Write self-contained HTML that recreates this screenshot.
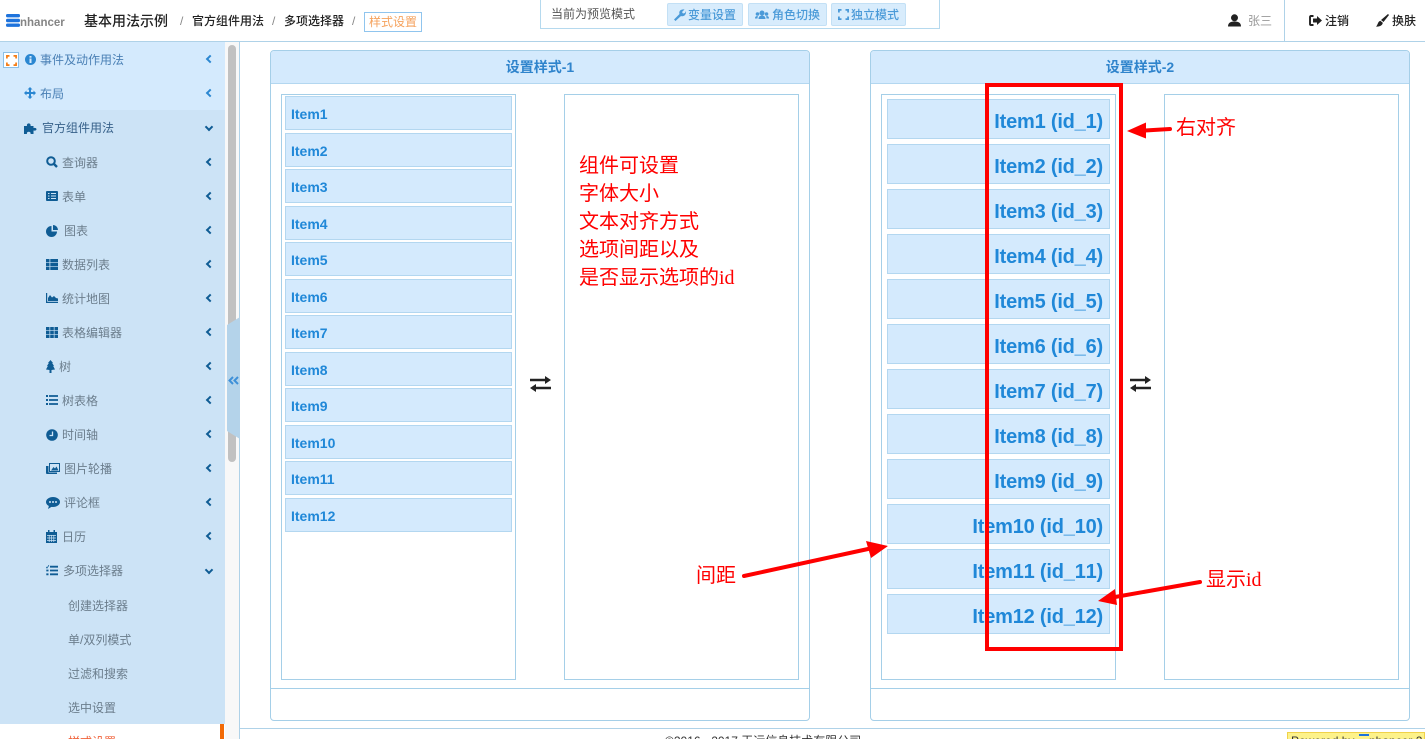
<!DOCTYPE html>
<html lang="zh"><head><meta charset="utf-8"><title>样式设置</title>
<style>
*{box-sizing:border-box}
html,body{margin:0;padding:0;width:1425px;height:739px;overflow:hidden;background:#fff;font-family:"Liberation Sans","Noto Sans CJK SC",sans-serif;font-size:12px;color:#333}
#w{position:relative;width:1425px;height:739px;overflow:hidden}
.a{position:absolute;white-space:nowrap}
svg{position:absolute;overflow:visible}
.m{position:absolute;white-space:nowrap;line-height:20px;height:20px;color:#6b7d8c;font-size:12px}
.m1{color:#4a80b5}
.ch{position:absolute;left:207px;width:6px;height:6px;border-left:2px solid #0f5c94;border-bottom:2px solid #0f5c94;transform:rotate(45deg)}
.ch.b{border-color:#2b87d1}
.ch.d{left:206px;transform:rotate(-45deg)}
.it{position:absolute;background:#d4eafd;border:1px solid #b3d7f0;color:#2088d8;font-weight:bold}
.l .it{left:285px;width:227px;height:34px;line-height:34px;padding-left:5px;font-size:14px}
.r .it{left:887px;width:223px;height:40px;line-height:44px;padding-right:6px;text-align:right;font-size:20px;letter-spacing:-.2px;font-kerning:none}
.box{position:absolute;top:94px;width:235px;height:586px;border:1px solid #a5cfe8;background:#fff}
.panel{position:absolute;top:50px;height:671px;border:1px solid #a5cfe8;border-radius:4px;background:#fff}
.head{position:absolute;left:0;right:0;top:0;height:33px;background:#d4eafd;border-bottom:1px solid #b3d7f0;border-radius:3px 3px 0 0;text-align:center;line-height:32px;color:#2f84cc;font-weight:bold;font-size:14px}
.foot{position:absolute;left:0;right:0;top:637px;border-top:1px solid #a5cfe8}
.btn{position:absolute;top:3px;height:23px;background:#d8ecfc;border:1px solid #c3e0f5;border-radius:2px;color:#4a9ad8;font-size:12px;line-height:22px;font-weight:500;white-space:nowrap}
.red{position:absolute;color:#f00;font-size:20px;white-space:nowrap;font-family:"Liberation Serif","Noto Sans CJK SC",sans-serif}
</style></head><body><div id="w">

<!-- header -->
<div class="a" style="left:0;top:41px;width:1425px;height:1px;background:#afd2e8"></div>
<svg style="left:6px;top:14px" width="14" height="13"><rect y="0" width="14" height="3.400" rx="1.500" fill="#1e73dc"/><rect y="4.800" width="14" height="3.400" rx="1.500" fill="#1e73dc"/><rect y="9.500" width="14" height="3.400" rx="1.500" fill="#1e73dc"/></svg>
<div class="a" style="left:20px;top:15px;font-size:11.500px;font-weight:bold;color:#858585;line-height:16px">nhancer</div>
<div class="a" style="left:84px;top:11px;font-size:14px;line-height:20px;color:#222;font-weight:500">基本用法示例</div>
<div class="a" style="left:180px;top:13px;line-height:16px;color:#888">/</div>
<div class="a" style="left:192px;top:13px;line-height:17px;color:#222;font-weight:500">官方组件用法</div>
<div class="a" style="left:272px;top:13px;line-height:16px;color:#888">/</div>
<div class="a" style="left:284px;top:13px;line-height:17px;color:#222;font-weight:500">多项选择器</div>
<div class="a" style="left:352px;top:13px;line-height:16px;color:#888">/</div>
<div class="a" style="left:364px;top:12px;width:58px;height:20px;border:1px solid #90c5ee;color:#f5a25d;text-align:center;line-height:18px">样式设置</div>

<div class="a" style="left:540px;top:-1px;width:400px;height:30px;border:1px solid #b5d9ee;background:#fff"></div>
<div class="a" style="left:551px;top:6px;line-height:16px;color:#555">当前为预览模式</div>
<div class="btn" style="left:667px;width:76px;padding-left:20px">变量设置</div>
<svg style="left:674px;top:9px" width="12" height="12" viewBox="0 0 12 12"><path d="M0 10.500 5.500 5C4.500 2 7 0 10.500 .5L8 3 9 4.500 11 4 12 2C12.500 6 9.500 8 7 7L1.500 12Z" fill="#4b9ad8"/></svg>
<div class="btn" style="left:748px;width:79px;padding-left:23px">角色切换</div>
<svg style="left:755px;top:10px" width="14" height="10" viewBox="0 0 14 10"><circle cx="7" cy="3" r="2.500" fill="#4b9ad8"/><circle cx="2.500" cy="4" r="1.800" fill="#4b9ad8"/><circle cx="11.500" cy="4" r="1.800" fill="#4b9ad8"/><path d="M3.500 9C3.500 6.500 5 5.500 7 5.500S10.500 6.500 10.500 9ZM0 8.500C0 6.500 1 6 2.800 6L2.500 8.500ZM14 8.500C14 6.500 13 6 11.200 6L11.500 8.500Z" fill="#4b9ad8"/></svg>
<div class="btn" style="left:831px;width:75px;padding-left:19px">独立模式</div>
<svg style="left:838px;top:9px" width="11" height="11" viewBox="0 0 11 11" fill="none" stroke="#4b9ad8" stroke-width="1.800"><path d="M.9 3.500V.9H3.500M7.500.9H10.100V3.500M10.100 7.500V10.100H7.500M3.500 10.100H.9V7.500"/></svg>

<svg style="left:1228px;top:14px" width="13" height="13" viewBox="0 0 13 13"><circle cx="6.500" cy="3.800" r="3.500" fill="#222"/><path d="M0 12.500C0 8.500 3 7.500 6.500 7.500S13 8.500 13 12.500Z" fill="#222"/></svg>
<div class="a" style="left:1248px;top:13px;line-height:17px;color:#999">张三</div>
<div class="a" style="left:1284px;top:0;width:1px;height:41px;background:#afd2e8"></div>
<svg style="left:1309px;top:15px" width="13" height="11" viewBox="0 0 13 11"><path d="M4.500 1H2Q1 1 1 2V9Q1 10 2 10H4.500" fill="none" stroke="#222" stroke-width="1.900"/><path d="M4 3.500H8V1L13 5.500 8 10V7.500H4Z" fill="#222"/></svg>
<div class="a" style="left:1325px;top:13px;line-height:17px;color:#222;font-weight:500">注销</div>
<svg style="left:1376px;top:14px" width="13" height="13" viewBox="0 0 13 13"><path d="M12 0 13 1 7.500 8 5 6ZM4.300 6.800 6.800 8.800C6.500 11.500 3.500 13 0 12.500 2 11 1.500 8 4.300 6.800Z" fill="#222"/></svg>
<div class="a" style="left:1392px;top:13px;line-height:17px;color:#222;font-weight:500">换肤</div>

<!-- sidebar -->
<div class="a" style="left:0;top:42px;width:225px;height:68px;background:#d4eafd"></div>
<div class="a" style="left:0;top:110px;width:225px;height:614px;background:#cce3f6"></div>
<div class="a" style="left:0;top:724px;width:225px;height:15px;background:#fff"></div>
<div class="a" style="left:220px;top:724px;width:4px;height:15px;background:#f26a06"></div>
<div class="a" style="left:225px;top:42px;width:14px;height:697px;background:#f8f8f8"></div>
<div class="a" style="left:228px;top:45px;width:8px;height:417px;border-radius:4px;background:#c1c1c1"></div>
<div class="a" style="left:239px;top:42px;width:1px;height:697px;background:#afd2e8"></div>
<svg style="left:227px;top:317px" width="13" height="122" viewBox="0 0 13 122"><path d="M13 0V122L0 114V8Z" fill="#b4d3ea"/></svg>
<svg style="left:228px;top:376px" width="11" height="9" viewBox="0 0 11 9" fill="none" stroke="#3e90d8" stroke-width="2"><path d="M5 1 1.500 4.500 5 8M10 1 6.500 4.500 10 8"/></svg>
<div class="a" style="left:3px;top:52px;width:16px;height:16px;border:1px solid #8cbfe6;background:#fff"></div>
<svg style="left:5.500px;top:54.500px" width="11" height="11" viewBox="0 0 11 11" fill="none" stroke="#f57c14" stroke-width="1.700"><path d="M.9 3.500V.9H3.500M7.500.9H10.100V3.500M10.100 7.500V10.100H7.500M3.500 10.100H.9V7.500"/></svg>

<svg style="left:25px;top:54px" width="11" height="11" viewBox="0 0 11 11"><circle cx="5.500" cy="5.500" r="5.500" fill="#2b87d1"/><rect x="4.500" y="4.500" width="2" height="4.500" fill="#d4eafd"/><rect x="4.500" y="2" width="2" height="1.700" fill="#d4eafd"/></svg>
<div class="m m1" style="left:40px;top:50px">事件及动作用法</div><div class="ch b" style="top:56px"></div>
<svg style="left:24px;top:87px" width="12" height="12" viewBox="0 0 12 12"><path d="M6 0 8.500 2.500H7V5H9.500V3.500L12 6 9.500 8.500V7H7V9.500H8.500L6 12 3.500 9.500H5V7H2.500V8.500L0 6 2.500 3.500V5H5V2.500H3.500Z" fill="#2b87d1"/></svg>
<div class="m m1" style="left:40px;top:84px">布局</div><div class="ch b" style="top:90px"></div>
<svg style="left:24px;top:122px" width="13" height="12" viewBox="0 0 13 12"><path d="M0 4H3C2 .5 7.500 .5 6.500 4H9.500V6C13.500 5 13.500 9.500 9.500 8.500V12H6.500C7.500 9 2 9 3 12H0Z" fill="#0f5c94"/></svg>
<div class="m" style="left:42px;top:118px;color:#37618a">官方组件用法</div><div class="ch d" style="top:124px"></div>

<svg style="left:46px;top:156px" width="12" height="12" viewBox="0 0 12 12"><circle cx="5" cy="5" r="3.800" fill="none" stroke="#0f5c94" stroke-width="2"/><path d="M8 8 11 11" stroke="#0f5c94" stroke-width="2.400"/></svg>
<div class="m" style="left:62px;top:153px">查询器</div><div class="ch" style="top:159px"></div>
<svg style="left:46px;top:191px" width="12" height="10" viewBox="0 0 12 10"><rect width="12" height="10" rx="1" fill="#0f5c94"/><path d="M2 2.500H3.500M5 2.500H10M2 5H3.500M5 5H10M2 7.500H3.500M5 7.500H10" stroke="#cce3f6"/></svg>
<div class="m" style="left:62px;top:187px">表单</div><div class="ch" style="top:193px"></div>
<svg style="left:46px;top:225px" width="12" height="12" viewBox="0 0 12 12"><path d="M5.500 1V6.500H11A5.500 5.500 0 1 1 5.500 1ZM7 0A5 5 0 0 1 12 5H7Z" fill="#0f5c94"/></svg>
<div class="m" style="left:64px;top:221px">图表</div><div class="ch" style="top:227px"></div>
<svg style="left:46px;top:259px" width="12" height="11" viewBox="0 0 12 11"><path d="M0 0H3.500V3.200H0ZM4.300 0H12V3.200H4.300ZM0 3.900H3.500V7.100H0ZM4.300 3.900H12V7.100H4.300ZM0 7.800H3.500V11H0ZM4.300 7.800H12V11H4.300Z" fill="#0f5c94"/></svg>
<div class="m" style="left:62px;top:255px">数据列表</div><div class="ch" style="top:261px"></div>
<svg style="left:46px;top:293px" width="12" height="10" viewBox="0 0 12 10"><path d="M0 0H1.200V8.800H12V10H0ZM2 8V5L4 2 6 4.500 8 3 10 5 12 5.500V8Z" fill="#0f5c94"/></svg>
<div class="m" style="left:62px;top:289px">统计地图</div><div class="ch" style="top:295px"></div>
<svg style="left:46px;top:327px" width="12" height="11" viewBox="0 0 12 11"><path d="M0 0H3.500V3.200H0ZM4.200 0H7.800V3.200H4.200ZM8.500 0H12V3.200H8.500ZM0 3.900H3.500V7.100H0ZM4.200 3.900H7.800V7.100H4.200ZM8.500 3.900H12V7.100H8.500ZM0 7.800H3.500V11H0ZM4.200 7.800H7.800V11H4.200ZM8.500 7.800H12V11H8.500Z" fill="#0f5c94"/></svg>
<div class="m" style="left:62px;top:323px">表格编辑器</div><div class="ch" style="top:329px"></div>
<svg style="left:46px;top:360px" width="9" height="13" viewBox="0 0 9 13"><path d="M4.500 0 7 3H6.200L8 6H7.200L9 9.500 5.500 10V13H3.500V10L0 9.500 1.800 6H1L2.800 3H2Z" fill="#0f5c94"/></svg>
<div class="m" style="left:59px;top:357px">树</div><div class="ch" style="top:363px"></div>
<svg style="left:46px;top:395px" width="12" height="10" viewBox="0 0 12 10"><path d="M0 0H2V2H0ZM3 .1H12V1.900H3ZM0 4H2V6H0ZM3 4.100H12V5.900H3ZM0 8H2V10H0ZM3 8.100H12V9.900H3Z" fill="#0f5c94"/></svg>
<div class="m" style="left:62px;top:391px">树表格</div><div class="ch" style="top:397px"></div>
<svg style="left:46px;top:429px" width="12" height="12" viewBox="0 0 12 12"><circle cx="6" cy="6" r="5.800" fill="#0f5c94"/><path d="M6.500 2.500V6.500H3.500" fill="none" stroke="#cce3f6" stroke-width="1.300"/></svg>
<div class="m" style="left:62px;top:425px">时间轴</div><div class="ch" style="top:431px"></div>
<svg style="left:46px;top:463px" width="14" height="11" viewBox="0 0 14 11"><path d="M3.500 .5H13.500V8.500H3.500Z" fill="none" stroke="#0f5c94"/><path d="M5 7.500 7.500 4 9 5.500 10.500 3.500 12.500 7.500Z" fill="#0f5c94"/><path d="M2.500 3V9.500H11V11H1Q0 11 0 10V3Z" fill="#0f5c94"/></svg>
<div class="m" style="left:64px;top:459px">图片轮播</div><div class="ch" style="top:465px"></div>
<svg style="left:46px;top:497px" width="14" height="12" viewBox="0 0 14 12"><ellipse cx="7" cy="5" rx="7" ry="5" fill="#0f5c94"/><path d="M3 8.500 2 12 6 9.500Z" fill="#0f5c94"/><circle cx="4" cy="5" r="1" fill="#cce3f6"/><circle cx="7" cy="5" r="1" fill="#cce3f6"/><circle cx="10" cy="5" r="1" fill="#cce3f6"/></svg>
<div class="m" style="left:64px;top:493px">评论框</div><div class="ch" style="top:499px"></div>
<svg style="left:46px;top:530px" width="11" height="13" viewBox="0 0 11 13"><path d="M0 2H2V0H3.500V2H7.500V0H9V2H11V13H0Z" fill="#0f5c94"/><path d="M1 5.500H10M1 8H10M1 10.500H10M3.200 5V12M5.500 5V12M7.800 5V12" stroke="#cce3f6" stroke-width=".7"/></svg>
<div class="m" style="left:62px;top:527px">日历</div><div class="ch" style="top:533px"></div>
<svg style="left:46px;top:565px" width="12" height="11" viewBox="0 0 12 11"><path d="M4 .8H12V2.600H4ZM4 4.600H12V6.400H4ZM4 8.400H12V10.200H4ZM0 1.500 1 2.500 2.500 0 3.200 .5 1 3.700 0 2.500ZM.3 4.600H2.500V6.400H.3ZM.3 8.400H2.500V10.200H.3Z" fill="#0f5c94"/></svg>
<div class="m" style="left:63px;top:561px">多项选择器</div><div class="ch d" style="top:567px"></div>
<div class="m" style="left:68px;top:596px">创建选择器</div>
<div class="m" style="left:68px;top:630px">单/双列模式</div>
<div class="m" style="left:68px;top:664px">过滤和搜索</div>
<div class="m" style="left:68px;top:698px">选中设置</div>
<div class="m" style="left:68px;top:732px;color:#f0623a">样式设置</div>

<!-- panels -->
<div class="panel" style="left:270px;width:540px"><div class="head">设置样式-1</div><div class="foot"></div></div>
<div class="panel" style="left:870px;width:540px"><div class="head">设置样式-2</div><div class="foot"></div></div>
<div class="box" style="left:281px"></div>
<div class="box" style="left:564px"></div>
<div class="box" style="left:881px"></div>
<div class="box" style="left:1164px"></div>

<div class="l">
<div class="it" style="top:96px">Item1</div>
<div class="it" style="top:133px">Item2</div>
<div class="it" style="top:169px">Item3</div>
<div class="it" style="top:206px">Item4</div>
<div class="it" style="top:242px">Item5</div>
<div class="it" style="top:279px">Item6</div>
<div class="it" style="top:315px">Item7</div>
<div class="it" style="top:352px">Item8</div>
<div class="it" style="top:388px">Item9</div>
<div class="it" style="top:425px">Item10</div>
<div class="it" style="top:461px">Item11</div>
<div class="it" style="top:498px">Item12</div>
</div>
<div class="r">
<div class="it" style="top:99px">Item1 (id_1)</div>
<div class="it" style="top:144px">Item2 (id_2)</div>
<div class="it" style="top:189px">Item3 (id_3)</div>
<div class="it" style="top:234px">Item4 (id_4)</div>
<div class="it" style="top:279px">Item5 (id_5)</div>
<div class="it" style="top:324px">Item6 (id_6)</div>
<div class="it" style="top:369px">Item7 (id_7)</div>
<div class="it" style="top:414px">Item8 (id_8)</div>
<div class="it" style="top:459px">Item9 (id_9)</div>
<div class="it" style="top:504px">Item10 (id_10)</div>
<div class="it" style="top:549px">Item11 (id_11)</div>
<div class="it" style="top:594px">Item12 (id_12)</div>
</div>

<svg style="left:530px;top:376px" width="21" height="16" viewBox="0 0 21 16"><path d="M0 2.800H15V0L21 4 15 8V5.200H0ZM21 10.800V13.200H6V16L0 12 6 8V10.800Z" fill="#222"/></svg>
<svg style="left:1130px;top:376px" width="21" height="16" viewBox="0 0 21 16"><path d="M0 2.800H15V0L21 4 15 8V5.200H0ZM21 10.800V13.200H6V16L0 12 6 8V10.800Z" fill="#222"/></svg>

<!-- annotations -->
<div class="red" style="left:579px;top:152px;line-height:28px;white-space:pre">组件可设置
字体大小
文本对齐方式
选项间距以及
是否显示选项的id</div>
<div class="a" style="left:985px;top:83px;width:138px;height:568px;border:4px solid #f00"></div>
<svg style="left:0;top:0" width="1425" height="739">
<path d="M1170 129 1145 130.500" stroke="#f00" stroke-width="4" stroke-linecap="round"/><path d="M1127 131 1146 122.500 1146 138.500Z" fill="#f00"/>
<path d="M744 576 868 549" stroke="#f00" stroke-width="4" stroke-linecap="round"/><path d="M888 546 866 541 871 558Z" fill="#f00"/>
<path d="M1200 582 1115 597" stroke="#f00" stroke-width="4" stroke-linecap="round"/><path d="M1098 601 1115 589 1117 605Z" fill="#f00"/>
</svg>
<div class="red" style="left:1176px;top:116px;line-height:24px">右对齐</div>
<div class="red" style="left:696px;top:564px;line-height:24px">间距</div>
<div class="red" style="left:1206px;top:568px;line-height:24px">显示id</div>

<!-- footer -->
<div class="a" style="left:240px;top:728px;width:1185px;height:1px;background:#afd2e8"></div>
<div class="a" style="left:665px;top:734px;line-height:14px;color:#333;font-size:12px">©2016 - 2017 天运信息技术有限公司</div>
<div class="a" style="left:1287px;top:732px;width:138px;height:10px;background:#fdf28a;border:1px solid #f0d24a"></div>
<div class="a" style="left:1291px;top:734px;line-height:14px;color:#333;font-size:12px">Powered by</div>
<div class="a" style="left:1359px;top:734px;width:10px;height:2px;background:#1e73dc"></div>
<div class="a" style="left:1369px;top:734px;line-height:14px;color:#333;font-size:12px">nhancer 2</div>
</div></body></html>
